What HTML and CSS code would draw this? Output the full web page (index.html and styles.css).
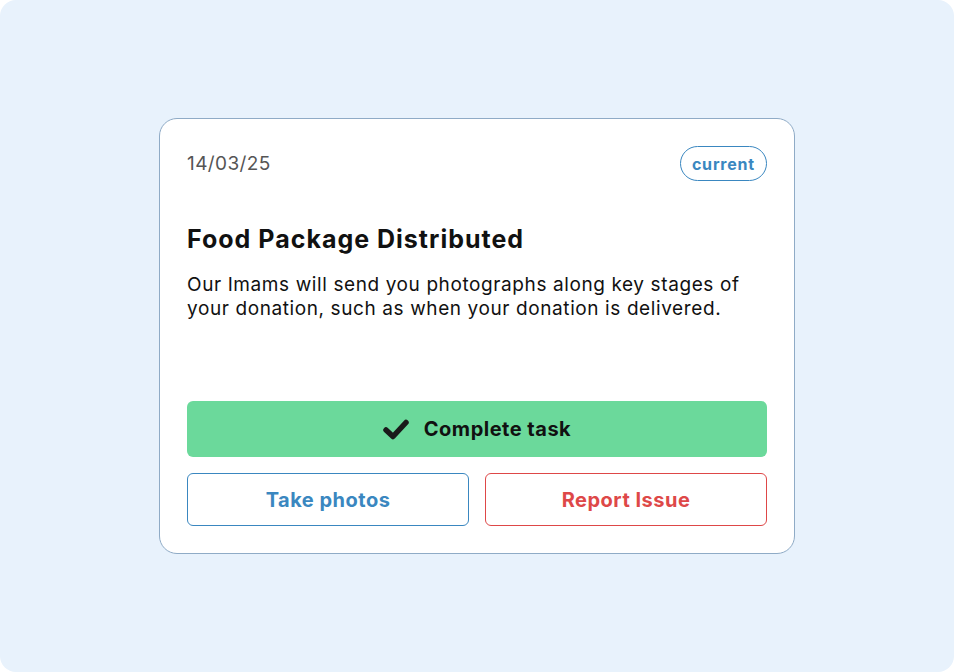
FILE: index.html
```html
<!DOCTYPE html>
<html>
<head>
  <title>Task card</title>
  <link rel="stylesheet" href="styles.css">
</head>
<body>

<div class="page">
  <div class="card">
    <div class="card-head">
      <span class="date">14/03/25</span>
      <span class="badge">current</span>
    </div>

    <h2 class="title">Food Package Distributed</h2>
    <p class="desc">Our Imams will send you photographs along key stages of your donation, such as when your donation is delivered.</p>

    <div class="actions">
      <button class="btn btn-complete">
        <svg class="check" width="26" height="21" viewBox="0 0 26 21">
          <path d="M3 11 L10 17.5 L23 3.5" fill="none" stroke="#1a1a1a" stroke-width="5.5" stroke-linecap="round" stroke-linejoin="round"/>
        </svg>
        Complete task
      </button>
      <div class="btn-row">
        <button class="btn btn-outline btn-blue">Take photos</button>
        <button class="btn btn-outline btn-red">Report Issue</button>
      </div>
    </div>
  </div>
</div>

</body>
</html>
```

FILE: styles.css
```css
/* page */
body {
  margin: 0;
  background-color: white;
  font-family: Inter, "Open Sans", sans-serif;
}
.page {
  height: 672px;
  background-color: #e8f2fc;
  border-radius: 16px;
  display: flex;
  justify-content: center;
  align-items: center;
}
/* card */
.card {
  box-sizing: border-box;
  width: 636px;
  height: 436px;
  padding: 27px;
  background-color: white;
  border: 1px solid #8fabc6;
  border-radius: 18px;
  display: flex;
  flex-direction: column;
}
.card-head {
  display: flex;
  justify-content: space-between;
  align-items: center;
  height: 35px;
}
.date {
  font-size: 19px;
  color: #555;
  letter-spacing: 0.4px;
}
.badge {
  box-sizing: border-box;
  height: 35px;
  padding: 0 11px;
  display: flex;
  align-items: center;
  border: 1.5px solid #3a87c0;
  border-radius: 18px;
  color: #3a87c0;
  font-size: 16px;
  font-weight: 700;
  letter-spacing: 0.8px;
}
.title {
  margin: 43px 0 0;
  font-size: 25px;
  line-height: 30px;
  font-weight: 700;
  color: #111;
  letter-spacing: 1px;
}
.desc {
  margin: 19px 0 0;
  font-size: 19px;
  line-height: 24px;
  color: #111;
  letter-spacing: 0.6px;
}
/* buttons */
.actions {
  margin-top: auto;
  display: flex;
  flex-direction: column;
  gap: 16px;
}
.btn {
  box-sizing: border-box;
  font-family: inherit;
  font-size: 20px;
  font-weight: 700;
  letter-spacing: 0.5px;
  border-radius: 6px;
  cursor: pointer;
  display: flex;
  justify-content: center;
  align-items: center;
}
.btn-complete {
  height: 56px;
  border: none;
  background-color: #6bd99b;
  color: #111;
  gap: 15px;
}
.btn-row {
  display: flex;
  gap: 16px;
}
.btn-outline {
  flex: 1;
  height: 53px;
  background-color: white;
}
.btn-blue {
  border: 1.5px solid #3a87c0;
  color: #3a87c0;
}
.btn-red {
  border: 1.5px solid #de4848;
  color: #de4848;
}
```
